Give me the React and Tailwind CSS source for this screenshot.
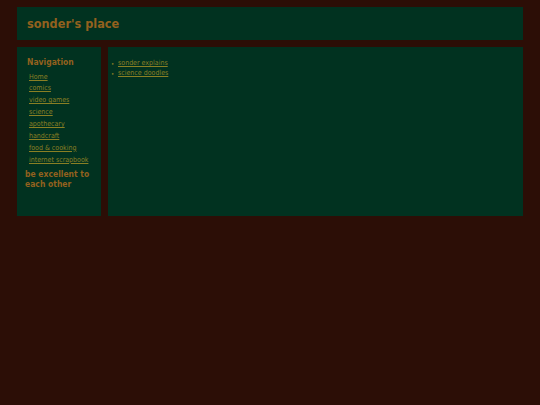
export default function App() {
  const links = ["Home", "comics", "video games", "science", "apothecary", "handcraft", "food & cooking", "internet scrapbook"];
  return (
    <div className="min-h-[405px] w-[540px] bg-[#2c0e06] px-[17px] pt-[7px] pb-4 font-['DejaVu_Sans_Condensed','DejaVu_Sans',sans-serif] font-stretch-condensed">
      <header className="h-[33px] bg-[#013220] flex items-center px-[10px] pt-[2px]">
        <h1 className="text-[12.6px] font-bold text-[#93611e] leading-none">sonder's place</h1>
      </header>
      <div className="mt-[7px] flex gap-[7px]">
        <aside className="w-[84px] h-[169px] bg-[#013220] pl-[8px] pt-[11px] shrink-0">
          <h2 className="text-[8.5px] font-bold text-[#93611e] leading-none ml-[2px]">Navigation</h2>
          <ul className="mt-[5px] ml-[4px] flex flex-col">
            {links.map((l) => (
              <li key={l} className="h-[11.9px] text-[7px] leading-[11.9px]">
                <a className="text-[#8a7f24] underline">{l}</a>
              </li>
            ))}
          </ul>
          <p className="mt-[2px] text-[8.5px] font-bold text-[#93611e] leading-[10px]">be excellent to each other</p>
        </aside>
        <main className="flex-1 h-[169px] bg-[#013220] pt-[12px] pl-[3px]">
          <ul className="text-[7px] leading-[9.5px]">
            {["sonder explains", "science doodles"].map((l) => (
              <li key={l} className="flex items-center">
                <span className="text-[#8a7f24] w-[7px] text-[6px]">•</span>
                <a className="text-[#8a7f24] underline">{l}</a>
              </li>
            ))}
          </ul>
        </main>
      </div>
    </div>
  );
}
